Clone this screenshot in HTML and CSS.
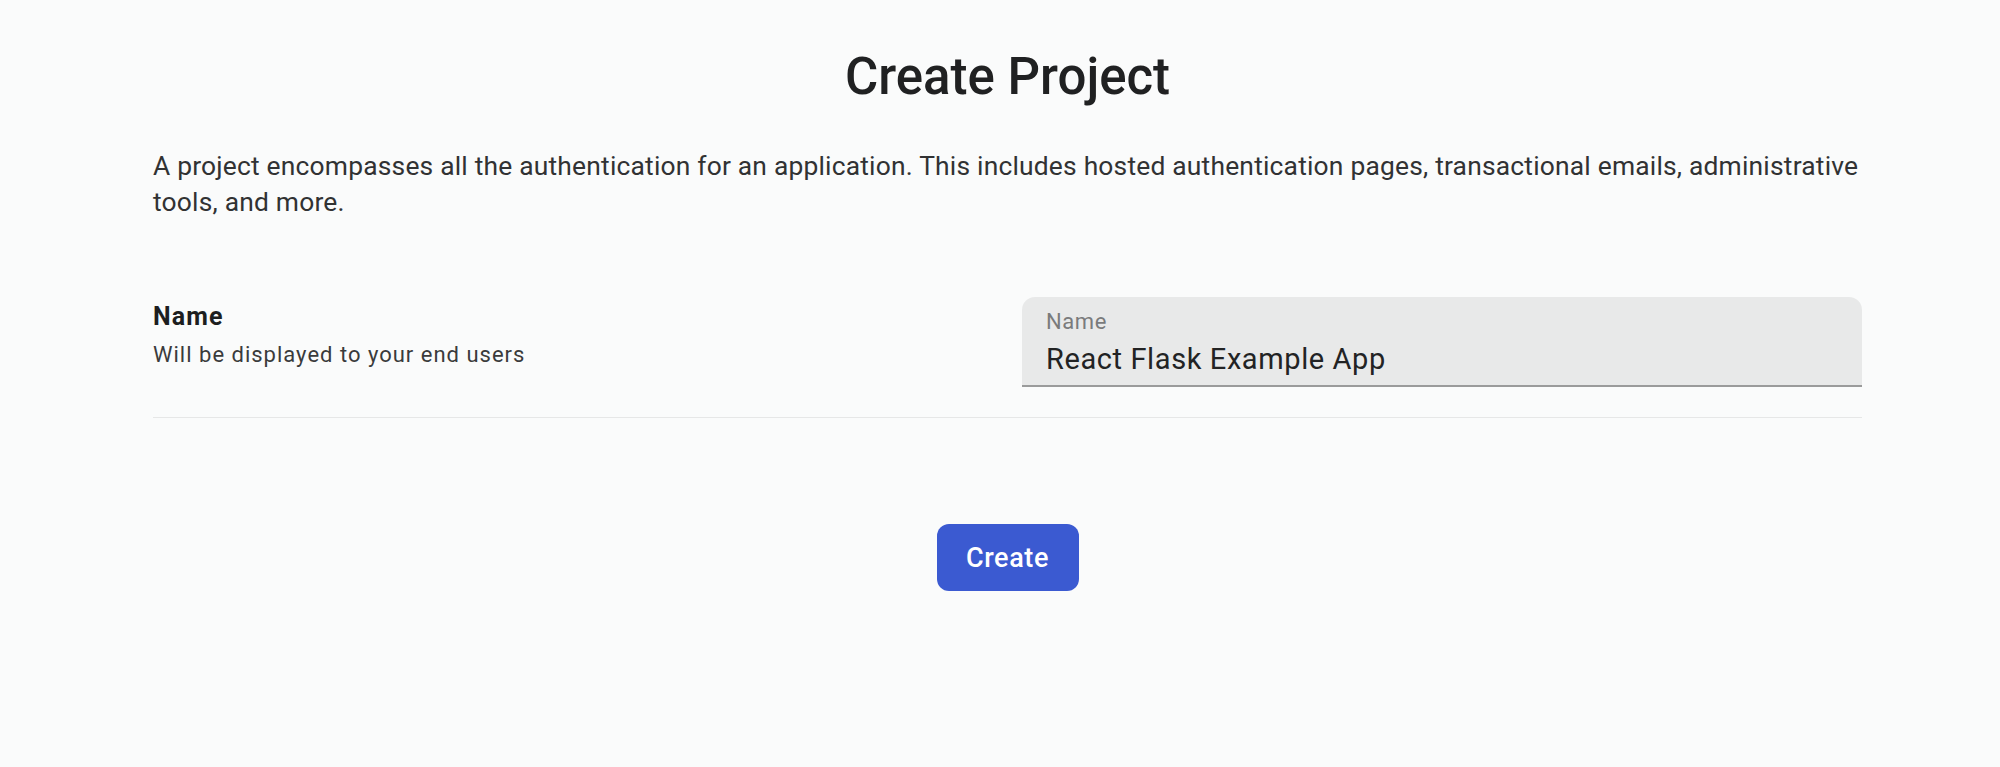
FILE: index.html
```html
<!DOCTYPE html>
<html lang="en">
<head>
<meta charset="utf-8">
<title>Create Project</title>
<link rel="stylesheet" href="styles.css">
</head>
<body>
<main class="page">
  <h1 class="title">Create Project</h1>
  <p class="intro">A project encompasses all the authentication for an application. This includes hosted authentication pages, transactional emails, administrative tools, and more.</p>
  <section class="field-row">
    <div class="field-info">
      <div class="field-name">Name</div>
      <div class="field-help">Will be displayed to your end users</div>
    </div>
    <div class="text-field">
      <label class="text-field-label" for="name">Name</label>
      <input class="text-field-input" id="name" type="text" value="React Flask Example App">
    </div>
  </section>
  <div class="actions">
    <button class="btn-primary" type="button">Create</button>
  </div>
</main>
</body>
</html>
```

FILE: styles.css
```css
html, body {
  margin: 0;
  padding: 0;
  background: #fafbfb;
}

body {
  font-family: Roboto, "Liberation Sans", Arial, sans-serif;
  color: #222324;
}

.page {
  width: 1709px;
  margin-left: 153px;
  padding-top: 46px;
  box-sizing: border-box;
}

.title {
  margin: 0;
  text-align: center;
  font-size: 51px;
  font-weight: 500;
  line-height: 1.2;
  color: #202122;
}

.intro {
  margin: 41px 0 0;
  font-size: 26.4px;
  line-height: 36px;
  letter-spacing: 0.2px;
  color: #313233;
}

.field-row {
  display: grid;
  grid-template-columns: 1fr 840px;
  margin-top: 77px;
  padding-bottom: 30px;
  border-bottom: 1px solid #e6e7e7;
}

.field-info {
  padding-top: 4px;
}

.field-name {
  font-size: 25px;
  font-weight: 700;
  line-height: 31px;
  letter-spacing: 1.1px;
  color: #1d1e1f;
}

.field-help {
  margin-top: 9px;
  font-size: 22px;
  line-height: 27px;
  letter-spacing: 1px;
  color: #3a3b3c;
}

.text-field {
  position: relative;
  height: 88px;
  background: #e8e9e9;
  border-radius: 13px 13px 0 0;
  border-bottom: 2px solid #9a9b9b;
  box-sizing: content-box;
}

.text-field-label {
  position: absolute;
  left: 24px;
  top: 13px;
  font-size: 22px;
  line-height: 24px;
  letter-spacing: 0.6px;
  color: #7a7b7c;
}

.text-field-input {
  display: block;
  width: 100%;
  box-sizing: border-box;
  padding: 36px 24px 0;
  height: 88px;
  border: 0;
  background: transparent;
  font-family: Roboto, "Liberation Sans", Arial, sans-serif;
  font-size: 29px;
  letter-spacing: 0.6px;
  color: #222324;
  outline: none;
}

.actions {
  display: flex;
  justify-content: center;
  margin-top: 106px;
}

.btn-primary {
  width: 142px;
  height: 67px;
  border: 0;
  border-radius: 12px;
  background: #3b5ad1;
  color: #ffffff;
  font-family: Roboto, "Liberation Sans", Arial, sans-serif;
  font-size: 27px;
  font-weight: 500;
  letter-spacing: 0.6px;
  cursor: pointer;
}
```
